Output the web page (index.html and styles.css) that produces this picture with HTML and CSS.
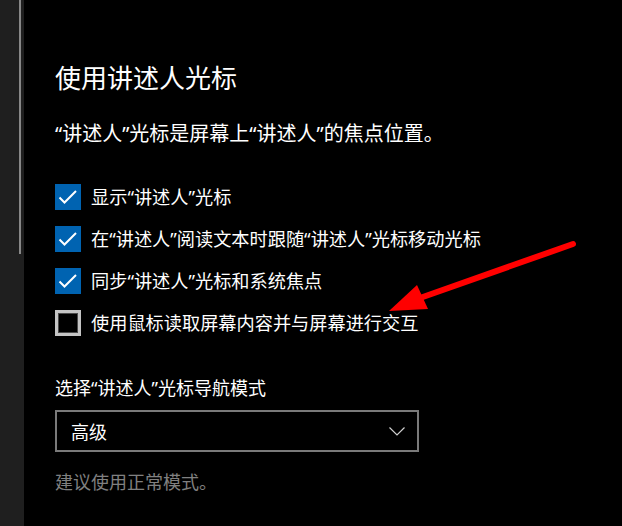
FILE: index.html
```html
<!DOCTYPE html>
<html lang="zh-CN">
<head>
<meta charset="utf-8">
<title>使用讲述人光标</title>
<link rel="stylesheet" href="styles.css">
</head>
<body>
<div class="page">
  <aside class="side"><div class="scrollbar"></div></aside>
  <main class="main">
    <h1 class="title">使用讲述人光标</h1>
    <p class="desc">“讲述人”光标是屏幕上“讲述人”的焦点位置。</p>
    <div class="checks">
      <label class="check">
        <span class="box on"><svg viewBox="0 0 26 26" width="26" height="26"><polyline points="4.5,13.5 9.5,18.5 21,7" fill="none" stroke="#fff" stroke-width="2"/></svg></span>
        <span class="text">显示“讲述人”光标</span>
      </label>
      <label class="check">
        <span class="box on"><svg viewBox="0 0 26 26" width="26" height="26"><polyline points="4.5,13.5 9.5,18.5 21,7" fill="none" stroke="#fff" stroke-width="2"/></svg></span>
        <span class="text">在“讲述人”阅读文本时跟随“讲述人”光标移动光标</span>
      </label>
      <label class="check">
        <span class="box on"><svg viewBox="0 0 26 26" width="26" height="26"><polyline points="4.5,13.5 9.5,18.5 21,7" fill="none" stroke="#fff" stroke-width="2"/></svg></span>
        <span class="text">同步“讲述人”光标和系统焦点</span>
      </label>
      <label class="check">
        <span class="box off"></span>
        <span class="text">使用鼠标读取屏幕内容并与屏幕进行交互</span>
      </label>
    </div>
    <div class="field-label">选择“讲述人”光标导航模式</div>
    <div class="select">
      <span class="select-value">高级</span>
      <svg class="chev" viewBox="0 0 16 9" width="16" height="9"><polyline points="0.5,0.5 8,8 15.5,0.5" fill="none" stroke="#cfcfcf" stroke-width="1.2"/></svg>
    </div>
    <div class="hint">建议使用正常模式。</div>
  </main>
  <svg class="arrow" viewBox="0 0 622 526" width="622" height="526">
    <line x1="573" y1="244" x2="420" y2="298" stroke="#ff0000" stroke-width="6" stroke-linecap="round"/>
    <polygon points="389,311 417,285 428,309" fill="#ff0000"/>
  </svg>
</div>
</body>
</html>
```

FILE: styles.css
```css
html, body {
  margin: 0;
  padding: 0;
  background: #000;
}
body {
  font-family: "Noto Sans", "Noto Sans CJK SC", sans-serif;
  color: #fff;
}
.page {
  position: relative;
  display: flex;
  width: 622px;
  height: 526px;
  overflow: hidden;
}
.side {
  width: 24px;
  flex: none;
  background: #1f1f1f;
}
.scrollbar {
  margin-left: 19px;
  width: 2px;
  height: 254px;
  background: #888;
}
.main {
  flex: 1;
  padding: 59.5px 0 0 31px;
}
.title {
  margin: 0;
  font-size: 26px;
  line-height: 36px;
  font-weight: 400;
}
.desc {
  margin: 24.5px 0 0;
  font-size: 20px;
  line-height: 28px;
}
.checks {
  margin-top: 36px;
  display: flex;
  flex-direction: column;
  gap: 16px;
}
.check {
  display: flex;
  align-items: center;
  gap: 10px;
  height: 26px;
  font-size: 18.2px;
  line-height: 26px;
}
.box {
  width: 26px;
  height: 26px;
  box-sizing: border-box;
  flex: none;
  display: block;
}
.box svg {
  display: block;
}
.box.on {
  background: #0063b1;
}
.box.off {
  border: 3px solid #c4c4c4;
  box-shadow: inset 0 0 0 1px #4a4a4a;
}
.field-label {
  margin-top: 40px;
  font-size: 18px;
  line-height: 24px;
}
.select {
  margin-top: 10px;
  width: 364px;
  height: 42px;
  box-sizing: border-box;
  border: 2px solid #7a7a7a;
  display: flex;
  align-items: center;
  justify-content: space-between;
  padding: 0 12px 0 14px;
  font-size: 18px;
}
.chev {
  display: block;
}
.hint {
  margin-top: 18px;
  font-size: 18px;
  line-height: 24px;
  color: #808080;
}
.arrow {
  position: absolute;
  left: 0;
  top: 0;
  pointer-events: none;
}
```
